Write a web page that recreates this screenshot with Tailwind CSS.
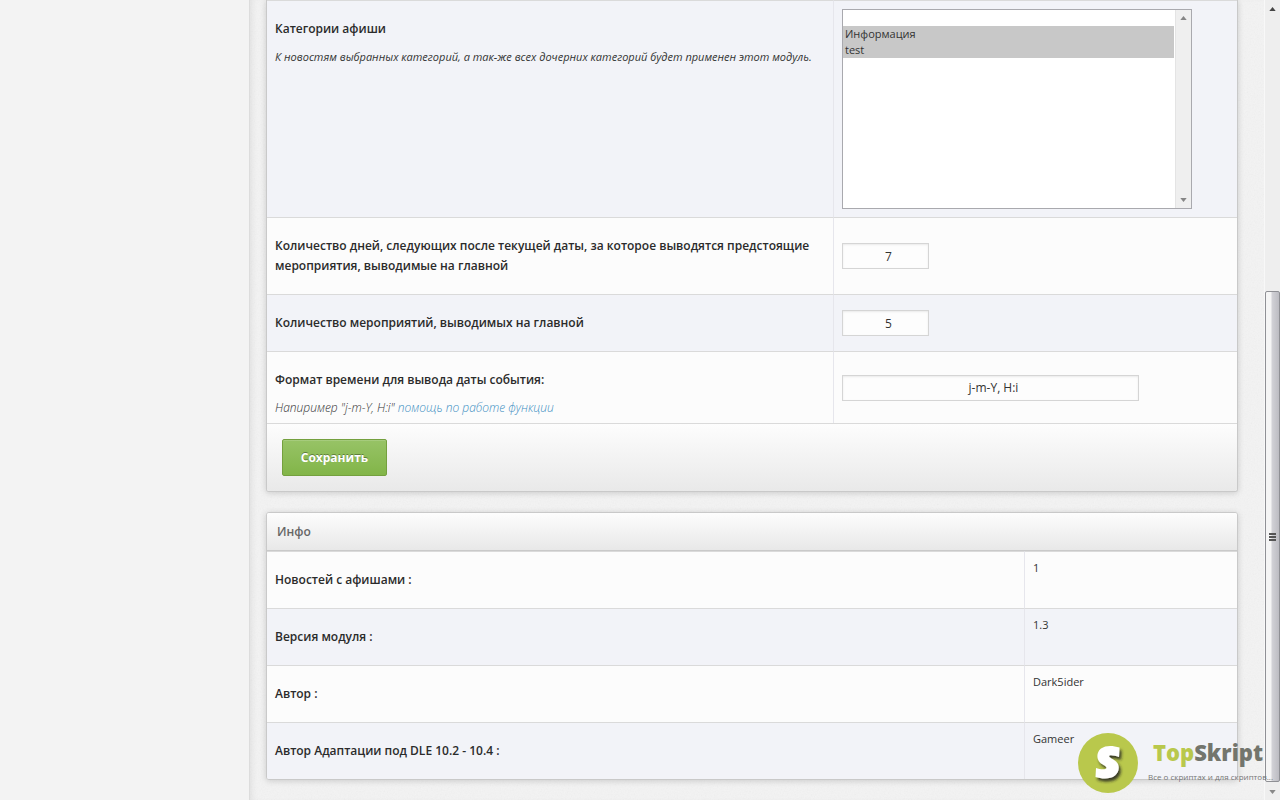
<!DOCTYPE html>
<html lang="ru">
<head>
<meta charset="utf-8">
<meta name="viewport" content="width=device-width, initial-scale=1">
<title>Настройки афиши</title>
<script src="https://cdn.jsdelivr.net/npm/@tailwindcss/browser@4"></script>
</head>
<body class="relative flex min-h-screen overflow-x-hidden bg-[#f3f3f3] font-['Open_Sans','Noto_Sans',sans-serif] text-xs leading-5 text-[#333]">
<aside class="w-[249px] shrink-0 bg-[#f3f3f3]"></aside>

<main class="relative min-w-0 flex-1 border-l border-[#dcdcdc] bg-[#f3f3f3] pr-[26px] pb-5 pl-4 shadow-[inset_5px_0_6px_-3px_rgba(0,0,0,0.07)]">
  <!-- paper grain -->
  <svg class="pointer-events-none absolute inset-0 h-full w-full opacity-8" aria-hidden="true"><filter id="grain"><feTurbulence type="fractalNoise" baseFrequency="0.7" numOctaves="2"/><feColorMatrix type="saturate" values="0"/></filter><rect width="100%" height="100%" filter="url(#grain)"/></svg>

  <form class="relative mb-5 overflow-hidden rounded-b-[3px] border border-t-0 border-[#c9c9c9] bg-[#fcfcfc] shadow-[0_1px_6px_rgba(0,0,0,0.16)]">
    <table class="w-full table-fixed border-separate border-spacing-0">
      <colgroup><col><col class="w-[403px]"></colgroup>
      <tbody>
        <tr class="bg-[#f2f3f8]">
          <td class="border-t border-r border-t-[#dadada] border-r-[#e6e6ec] px-2 pt-[18px] align-top">
            <label for="cats" class="block font-[560] text-[#2b2b2b]">Категории афиши</label>
            <p class="mt-2 text-[11px] italic">К новостям выбранных категорий, а так-же всех дочерних категорий будет применен этот модуль.</p>
          </td>
          <td class="border-t border-[#dadada] p-2">
            <div class="flex h-[200px] w-[350px] border border-[#a9a9ae] bg-white">
              <select id="cats" multiple class="min-w-0 flex-1 overflow-hidden bg-white text-[11px] leading-4 outline-none">
                <option class="h-4 min-h-4 p-0"></option>
                <option selected class="h-4 min-h-4 bg-[#c8c8c8] bg-linear-to-r from-[#c8c8c8] to-[#c8c8c8] px-0.5 py-0 text-[#333]">Информация</option>
                <option selected class="h-4 min-h-4 bg-[#c8c8c8] bg-linear-to-r from-[#c8c8c8] to-[#c8c8c8] px-0.5 py-0 text-[#333]">test</option>
              </select>
              <div class="ml-px flex w-4 flex-col items-center justify-between border-l border-[#e4e4e4] bg-[#efefef] py-1.5" aria-hidden="true">
                <svg width="7" height="4" viewBox="0 0 8 5"><path d="M4 0L8 5H0z" fill="#858585"/></svg>
                <svg width="7" height="4" viewBox="0 0 8 5"><path d="M0 0H8L4 5z" fill="#858585"/></svg>
              </div>
            </div>
          </td>
        </tr>
        <tr class="bg-[#fcfcfc]">
          <td class="h-[77px] border-t border-r border-t-[#dadada] border-r-[#e6e6ec] px-2"><label for="days" class="block font-[560] text-[#2b2b2b]">Количество дней, следующих после текущей даты, за которое выводятся предстоящие мероприятия, выводимые на главной</label></td>
          <td class="border-t border-[#dadada] px-2"><input id="days" type="text" value="7" class="block h-[26px] w-[87px] border border-[#d5d5d5] bg-[#fdfdfd] px-1.5 pl-3 text-center shadow-[inset_0_1px_2px_rgba(0,0,0,0.08)] outline-none"></td>
        </tr>
        <tr class="bg-[#f2f3f8]">
          <td class="h-[57px] border-t border-r border-t-[#dadada] border-r-[#e6e6ec] px-2"><label for="count" class="block font-[560] text-[#2b2b2b]">Количество мероприятий, выводимых на главной</label></td>
          <td class="border-t border-[#dadada] px-2"><input id="count" type="text" value="5" class="block h-[26px] w-[87px] border border-[#d5d5d5] bg-[#fdfdfd] px-1.5 pl-3 text-center shadow-[inset_0_1px_2px_rgba(0,0,0,0.08)] outline-none"></td>
        </tr>
        <tr class="bg-[#fcfcfc]">
          <td class="h-[72px] border-t border-r border-t-[#dadada] border-r-[#e6e6ec] px-2 pt-[18px] align-top">
            <label for="format" class="block font-[560] text-[#2b2b2b]">Формат времени для вывода даты события:</label>
            <p class="mt-2 text-xs leading-5 font-light italic">Напиример "j-m-Y, H:i" <a href="#" class="text-[#3d8fc2]">помощь по работе функции</a></p>
          </td>
          <td class="border-t border-[#dadada] px-2"><input id="format" type="text" value="j-m-Y, H:i" class="block h-[26px] w-[297px] border border-[#d5d5d5] bg-[#fdfdfd] px-1.5 pl-3 text-center shadow-[inset_0_1px_2px_rgba(0,0,0,0.08)] outline-none"></td>
        </tr>
      </tbody>
    </table>
    <div class="border-t border-[#dadada] bg-linear-to-b from-[#fdfdfd] to-[#e9e9e9] p-[15px]">
      <button type="button" class="block h-[37px] w-[105px] rounded-xs border border-[#74a03e] bg-linear-to-b from-[#97c366] to-[#82b548] font-bold text-white shadow-[inset_0_1px_0_rgba(255,255,255,0.15)] text-shadow-[0_-1px_0_rgba(0,0,0,0.35)]">Сохранить</button>
    </div>
  </form>

  <section class="relative overflow-hidden rounded-[3px] border border-[#c9c9c9] bg-[#fcfcfc] shadow-[0_1px_6px_rgba(0,0,0,0.16)]">
    <h2 class="h-[38px] border-b border-[#c9c9c9] bg-linear-to-b from-[#fdfdfd] to-[#e8e8e8] px-2.5 text-xs leading-[37px] font-[560] text-[#666]">Инфо</h2>
    <table class="w-full table-fixed border-separate border-spacing-0 text-left">
      <colgroup><col><col class="w-[212px]"></colgroup>
      <tbody>
        <tr class="bg-[#fcfcfc]"><th class="h-[57px] border-t border-r border-t-[#dadada] border-r-[#e6e6ec] px-2 font-[560] text-[#2b2b2b]">Новостей с афишами :</th><td class="border-t border-[#dadada] px-2 pt-1.5 align-top text-[11px]">1</td></tr>
        <tr class="bg-[#f2f3f8]"><th class="h-[57px] border-t border-r border-t-[#dadada] border-r-[#e6e6ec] px-2 font-[560] text-[#2b2b2b]">Версия модуля :</th><td class="border-t border-[#dadada] px-2 pt-1.5 align-top text-[11px]">1.3</td></tr>
        <tr class="bg-[#fcfcfc]"><th class="h-[57px] border-t border-r border-t-[#dadada] border-r-[#e6e6ec] px-2 font-[560] text-[#2b2b2b]">Автор :</th><td class="border-t border-[#dadada] px-2 pt-1.5 align-top text-[11px]">Dark5ider</td></tr>
        <tr class="bg-[#f2f3f8]"><th class="h-[57px] border-t border-r border-t-[#dadada] border-r-[#e6e6ec] px-2 font-[560] text-[#2b2b2b]">Автор Адаптации под DLE 10.2 - 10.4 :</th><td class="border-t border-[#dadada] px-2 pt-1.5 align-top text-[11px]">Gameer</td></tr>
      </tbody>
    </table>
  </section>
</main>

<div class="flex w-4 shrink-0 flex-col items-center border-l border-[#f8f8f8] bg-[#eeeeee]" aria-hidden="true">
  <div class="h-[291px] pt-[7px]"><svg class="block" width="7" height="4" viewBox="0 0 8 5"><path d="M4 0L8 5H0z" fill="#444"/></svg></div>
  <div class="flex w-full flex-1 flex-col items-center justify-center gap-px rounded-xs border border-[#8f9095] bg-linear-to-r from-[#f5f5f5] from-35% via-[#d0d0d5] via-50% to-[#bcbcc2]">
    <span class="h-0.5 w-[7px] bg-[#555]"></span><span class="h-0.5 w-[7px] bg-[#555]"></span><span class="h-0.5 w-[7px] bg-[#555]"></span>
  </div>
  <div class="h-[18px] pt-2"><svg class="block" width="7" height="4" viewBox="0 0 8 5"><path d="M0 0H8L4 5z" fill="#888"/></svg></div>
</div>

<!-- site badge over the page -->
<div class="absolute right-0 bottom-[7px] flex h-[60px] w-[202px] items-start whitespace-nowrap">
  <svg class="shrink-0" width="60" height="60" viewBox="0 0 60 60" role="img" aria-label="TopSkript">
    <defs><filter id="shade" x="-30%" y="-30%" width="170%" height="170%"><feDropShadow dx="2" dy="3" stdDeviation="1.5" flood-color="#222" flood-opacity="0.85"/></filter></defs>
    <circle cx="30" cy="30" r="30" fill="#b9c84c"/>
    <path filter="url(#shade)" fill="#fff" d="M41.500 14.500L41 24C37 22.500 31.500 21.500 31 23C31 24.500 35 26 38 28.500C42 32 41.500 39 37 42.500C32 46.500 24 46 17.500 44L18 35C22 36.500 28 37 28.500 35C28.500 33 25 32 22.500 30C18 26 18.500 19 23 15.500C28 12 35 12.500 41.500 14.500Z"/>
  </svg>
  <div class="flex flex-col pl-2.5">
    <div class="pl-[5px] font-['Open_Sans',sans-serif] text-[22px] leading-[38px] font-extrabold text-[#73756d]"><span class="text-[#b9c84c]">Top</span>Skript</div>
    <div class="text-[8px] leading-3 text-[#777]">Все о скриптах и для скриптов...</div>
  </div>
</div>
</body>
</html>
